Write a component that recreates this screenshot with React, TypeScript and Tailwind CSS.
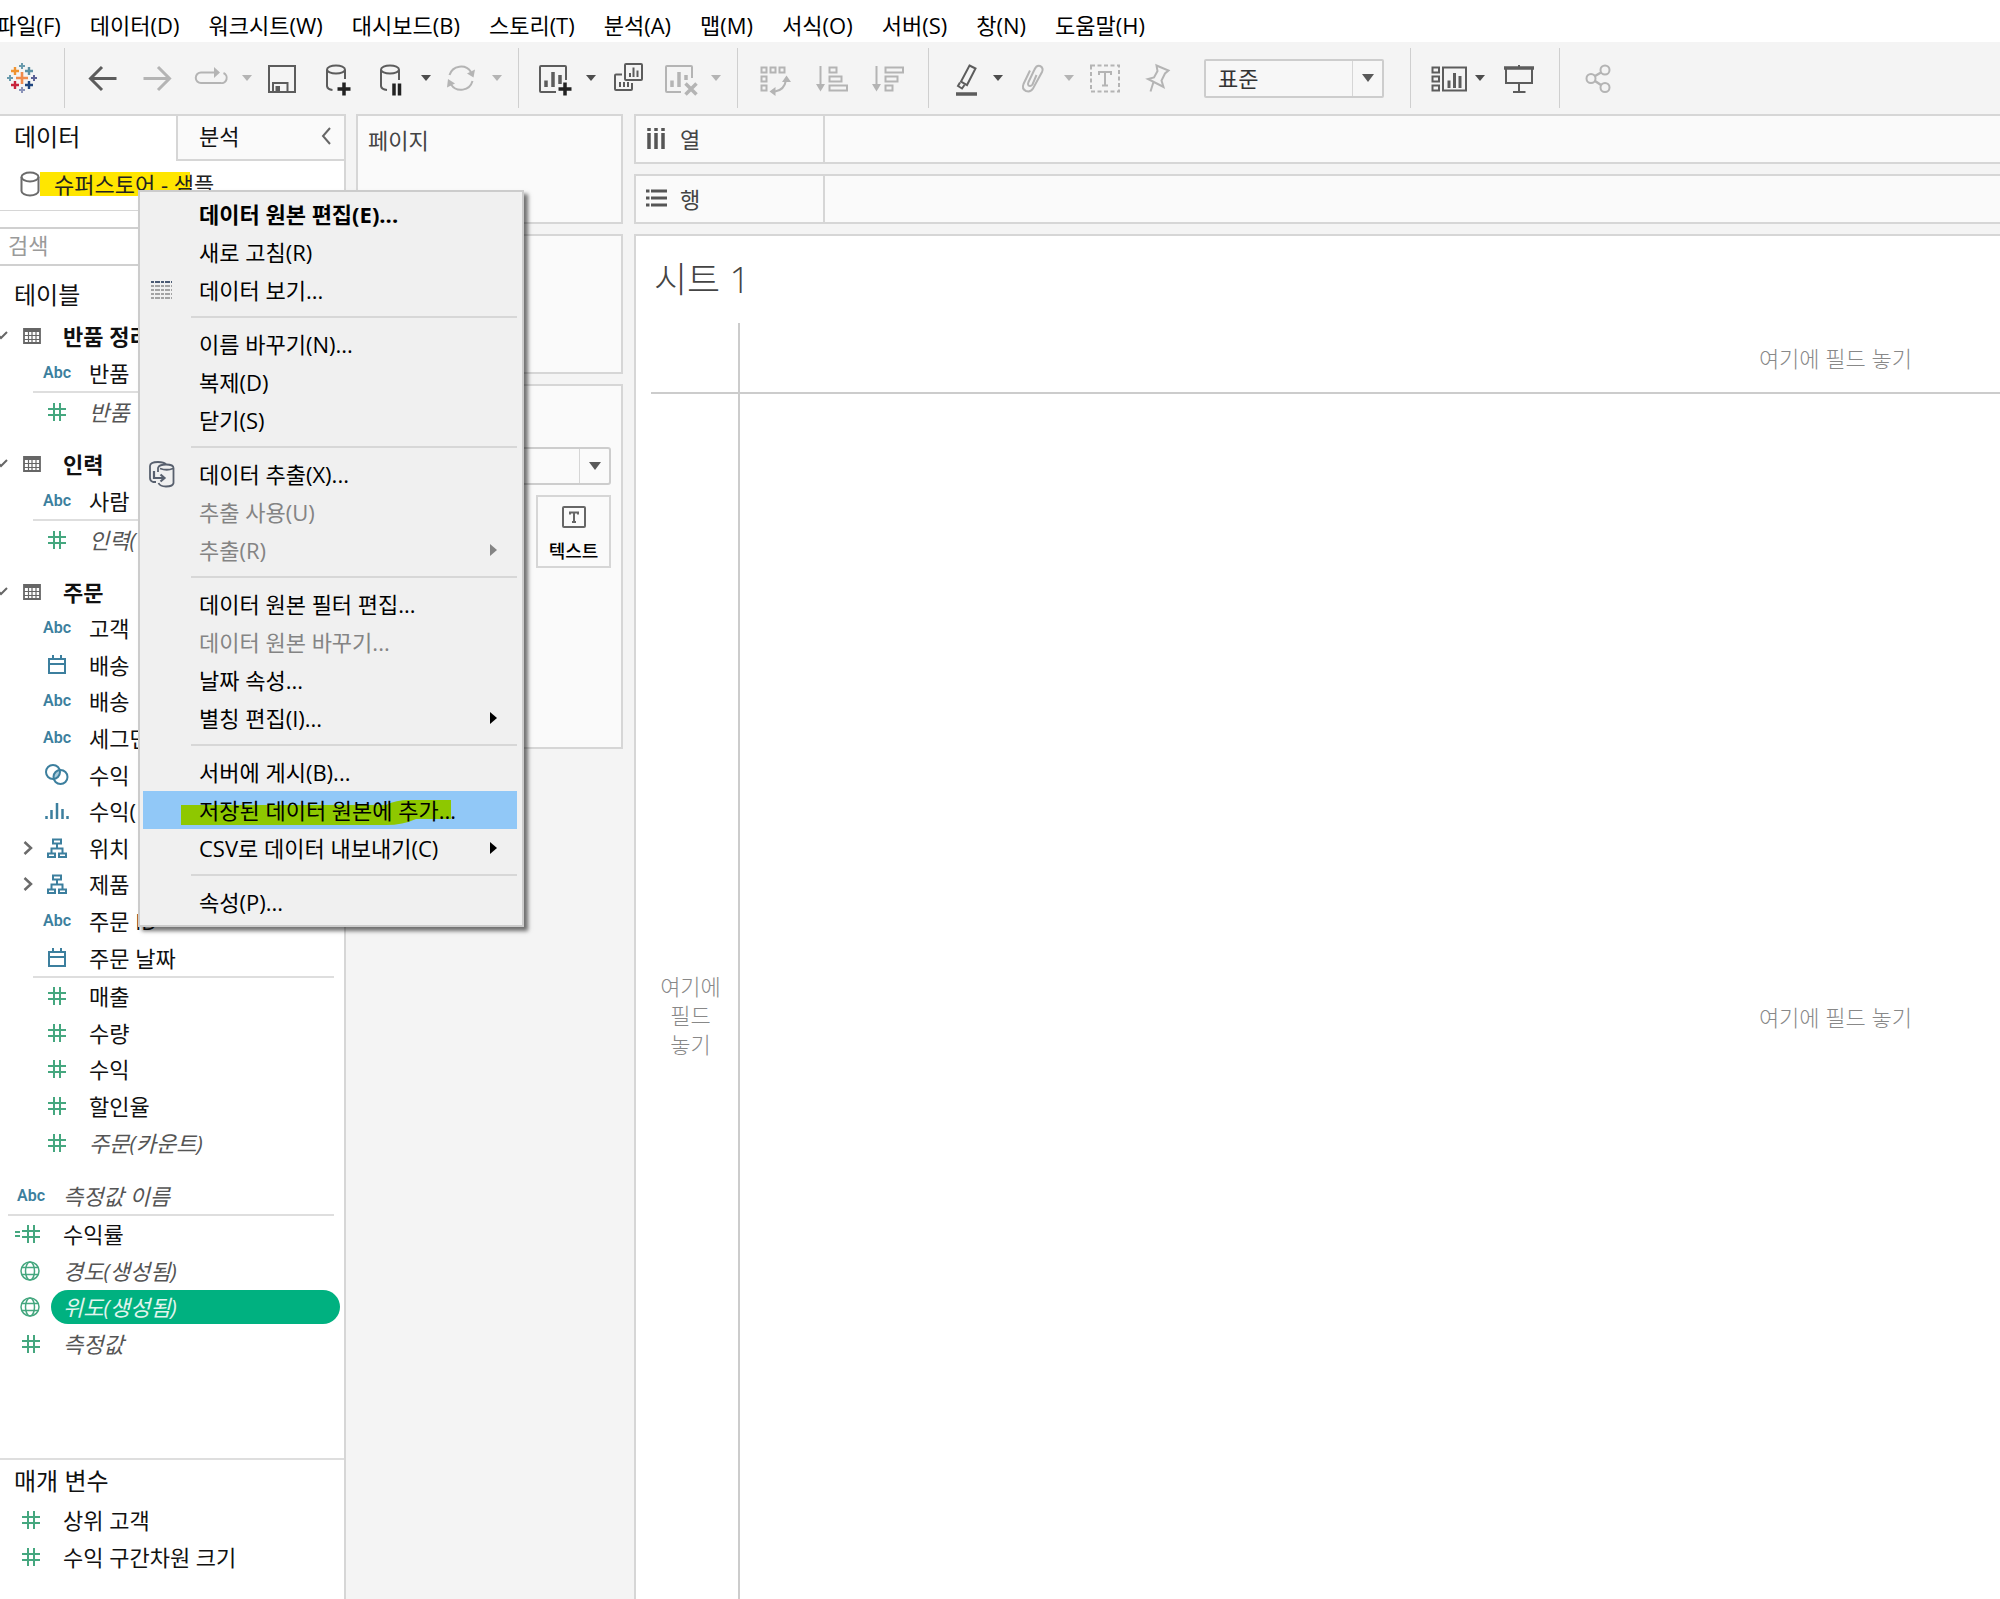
import type { ReactNode } from "react";

type Tone = "dark" | "light";

function Svg({ children, tone = "dark" }: { children: ReactNode; tone?: Tone }) {
  return (
    <svg
      viewBox="0 0 36 36"
      className={`size-9 shrink-0 ${tone === "dark" ? "text-[#5c5c5c]" : "text-[#b4b4b4]"}`}
      fill="none"
      stroke="currentColor"
      strokeWidth="2"
      aria-hidden="true"
    >
      {children}
    </svg>
  );
}

function Tool({ label, children, tone, wide = true }: { label: string; children: ReactNode; tone?: Tone; wide?: boolean }) {
  return (
    <button type="button" aria-label={label} className={`flex h-9 shrink-0 items-center justify-center ${wide ? "w-[54px]" : "w-11"}`}>
      <Svg tone={tone}>{children}</Svg>
    </button>
  );
}

function Caret({ label, tone = "dark" }: { label: string; tone?: Tone }) {
  return (
    <button type="button" aria-label={label} className="flex h-9 w-[17px] shrink-0 items-center justify-center">
      <svg viewBox="0 0 10 6" className={`h-[6px] w-[10px] ${tone === "dark" ? "text-[#4d4d4d]" : "text-[#b4b4b4]"}`} fill="currentColor" aria-hidden="true">
        <path d="M0 0H10L5 6Z" />
      </svg>
    </button>
  );
}

function Separator() {
  return <div className="h-[60px] w-px shrink-0 bg-[#cfcfcf]" />;
}

const menus = [
  "파일(F)",
  "데이터(D)",
  "워크시트(W)",
  "대시보드(B)",
  "스토리(T)",
  "분석(A)",
  "맵(M)",
  "서식(O)",
  "서버(S)",
  "창(N)",
  "도움말(H)",
];

function MenuBar() {
  return (
    <nav aria-label="메뉴" className="flex h-[42px] items-center gap-[29px] overflow-hidden bg-white pt-2 text-black">
      {menus.map((m) => (
        <button key={m} type="button" className={`shrink-0 ${m === "파일(F)" ? "-ml-1" : ""}`}>
          {m}
        </button>
      ))}
    </nav>
  );
}

const logoCrosses: [number, number, number, string][] = [
  [18, 18, 6, "#f08a4b"],
  [11, 11, 4, "#f0932f"],
  [25, 11, 4, "#5a8fa3"],
  [11, 25, 4, "#c8253c"],
  [25, 25, 4, "#1f457e"],
  [18, 6, 3, "#6a9bad"],
  [18, 30, 3, "#8a93b8"],
  [6, 18, 3, "#6a9bad"],
  [30, 18, 3, "#5b6196"],
];

function Toolbar() {
  return (
    <div role="toolbar" aria-label="도구 모음" className="flex h-[72px] items-center overflow-hidden bg-[#f4f4f4]">
      <div className="flex w-16 shrink-0 pl-1">
        <svg viewBox="0 0 36 36" className="size-9" role="img" aria-label="로고">
          {logoCrosses.map(([x, y, r, c], i) => (
            <path key={i} d={`M${x - r} ${y}H${x + r}M${x} ${y - r}V${y + r}`} stroke={c} strokeWidth={r > 4 ? 2.6 : r > 3 ? 2.4 : 2} />
          ))}
        </svg>
      </div>
      <Separator />
      <div className="flex shrink-0 items-center pr-[13px] pl-[11px]">
        <Tool label="뒤로">
          <path d="M31.5 18.5H6M17 7L5.500 18.500L17 30" strokeWidth="3" />
        </Tool>
        <Tool label="앞으로" tone="light">
          <path d="M4.500 18.500H30M19 7L30.500 18.500L19 30" strokeWidth="3" />
        </Tool>
        <Tool label="다시 실행" tone="light">
          <path d="M22 12.500H8A5.250 5.250 0 0 0 8 23H27.500A5.250 5.250 0 0 0 30.500 13" />
          <path d="M21 7L27 12.500L21 18Z" fill="currentColor" stroke="none" />
        </Tool>
        <Caret label="다시 실행 옵션" tone="light" />
        <Tool label="저장">
          <path d="M5 6H31V32H5ZM9 32V23H23.500V32" />
          <path d="M11.500 26H16V31H11.500Z" fill="currentColor" stroke="none" />
        </Tool>
        <Tool label="새 데이터 원본">
          <ellipse cx="18" cy="9.500" rx="9" ry="4" />
          <path d="M9 10V26Q9.500 29.500 14.500 30M27 10V19" />
          <path d="M26 22.500V35.500M19.500 29H32.500" stroke="#222" strokeWidth="3.500" />
        </Tool>
        <Tool label="자동 업데이트 일시 중지">
          <ellipse cx="18" cy="9.500" rx="9" ry="4" />
          <path d="M9 10V26Q9.500 29.500 15 30M27 10V20" />
          <path d="M22 23.500V35.500M27.500 23.500V35.500" stroke="#222" strokeWidth="3.500" />
        </Tool>
        <Caret label="업데이트 옵션" />
        <Tool label="새로 고침" tone="light">
          <path d="M6.500 15A12 12 0 0 1 28 12M29.500 21A12 12 0 0 1 8 24.500" />
          <path d="M32 9.500L30.500 17.500L24 13.500ZM4 27.500L5 19L12 23.500Z" fill="currentColor" stroke="none" />
        </Tool>
        <Caret label="새로 고침 옵션" tone="light" />
      </div>
      <Separator />
      <div className="flex shrink-0 items-center pr-[13px] pl-[9px]">
        <Tool label="새 워크시트">
          <path d="M19 32H4Q3 32 3 31V7Q3 6 4 6H28Q29 6 29 7V20" />
          <path d="M9 20.500V27M16 12V27M23 15V24" strokeWidth="3.500" />
          <path d="M28 22.500V35.500M21.500 29H34.500" stroke="#222" strokeWidth="3.500" />
        </Tool>
        <Caret label="새 워크시트 옵션" />
        <Tool label="복제">
          <path d="M17 5Q17 4 18 4H33Q34 4 34 5V19Q34 20 33 20H18Q17 20 17 19ZM14 14.500H8Q7 14.500 7 15.500V29Q7 30 8 30H23Q24 30 24 29V23" />
          <path d="M22 13V17M25.500 7.500V17M29.500 10.500V17M12 22V27M16 22V27M20 22V27" />
        </Tool>
        <Tool label="시트 지우기" tone="light">
          <path d="M19 32H5Q4 32 4 31V7Q4 6 5 6H29Q30 6 30 7V18" />
          <path d="M10 20.500V27M17 12V27M24 15V20" strokeWidth="3.500" />
          <path d="M23.500 23.500L34.500 34.500M34.500 23.500L23.500 34.500" strokeWidth="3.500" />
        </Tool>
        <Caret label="지우기 옵션" tone="light" />
      </div>
      <Separator />
      <div className="flex shrink-0 items-center gap-[2px] pr-[14px] pl-[10px]">
        <Tool label="행과 열 바꾸기" tone="light">
          <path d="M4.500 7.500H9.500V12.500H4.500ZM13.500 7.500H18.500V12.500H13.500ZM22.500 7.500H27.500V12.500H22.500ZM4.500 16.500H9.500V21.500H4.500ZM4.500 25.500H9.500V30.500H4.500Z" />
          <path d="M29 20Q27.500 30 18 31.500" />
          <path d="M29.500 15.500L34 22H25ZM12.500 31.500L18.500 27V36Z" fill="currentColor" stroke="none" />
        </Tool>
        <Tool label="오름차순 정렬" tone="light">
          <path d="M7.500 6V28M16.500 7.500H23.500V12.500H16.500ZM16.500 16.500H28.500V21.500H16.500ZM16.500 25.500H34V30.500H16.500Z" />
          <path d="M3 24H12L7.500 31.500Z" fill="currentColor" stroke="none" />
        </Tool>
        <Tool label="내림차순 정렬" tone="light">
          <path d="M7.500 6V28M16.500 7.500H34V12.500H16.500ZM16.500 16.500H28.500V21.500H16.500ZM16.500 25.500H23.500V30.500H16.500Z" />
          <path d="M3 24H12L7.500 31.500Z" fill="currentColor" stroke="none" />
        </Tool>
      </div>
      <Separator />
      <div className="flex shrink-0 items-center pr-[26px] pl-4">
        <Tool label="강조" wide={false}>
          <path d="M20.500 5.500L26.500 8.500L18 25L12 21.500ZM11 22.500L9 26L13 28.500L15.500 25" />
          <path d="M7 34H28" strokeWidth="3.500" />
        </Tool>
        <Caret label="강조 옵션" />
        <Tool label="그룹" tone="light">
          <path d="M21.500 15L17.500 24.500Q15.500 27 13.500 25.500Q12.500 24 13.500 22L19.500 9.500Q21.500 5 25 6Q29 8 27 12L18 28.500Q15.500 32.500 11 31Q6.500 29 8.500 24L15 10.500" />
        </Tool>
        <Caret label="그룹 옵션" tone="light" />
        <Tool label="레이블 표시" tone="light">
          <rect x="5" y="5.500" width="28" height="26" strokeDasharray="4 2.500" />
          <path d="M13 15V12H25V15M19 12V25.500M16 25.500H22" />
        </Tool>
        <Tool label="축 고정" tone="light">
          <path d="M16.500 5.500L28.500 10.500L25 13.500L21.500 20.500L23.500 27L8 19L14 17.500L17.500 11ZM13.500 22L10.500 31.500" />
        </Tool>
        <div className="relative ml-[19px] h-[39px] w-[180px] rounded-[2px] border-2 border-[#cdcdcd] bg-[#f7f7f7]">
          <select aria-label="맞춤" className="h-full w-full appearance-none bg-transparent pl-3 text-[#333] outline-none">
            <option>표준</option>
          </select>
          <SelectArrow />
        </div>
      </div>
      <Separator />
      <div className="flex shrink-0 items-center pr-[13px] pl-4">
        <Tool label="카드 표시" wide={false}>
          <path d="M1.500 7.500H8V12.500H1.500ZM1.500 16.500H8V21.500H1.500ZM1.500 25.500H8V30.500H1.500ZM12 7.500H35V30.500H12Z" />
          <path d="M18 20.500V28M23.500 13V28M29 16V28" strokeWidth="3" />
        </Tool>
        <Caret label="카드 옵션" />
        <div className="w-1" />
        <Tool label="프레젠테이션 모드">
          <path d="M5 9V23H31V9M18 5V8M18 23V32M12 32H24.500" />
          <path d="M3 8H33" strokeWidth="3.500" />
        </Tool>
      </div>
      <Separator />
      <div className="flex shrink-0 items-center pl-3">
        <Tool label="공유" tone="light">
          <circle cx="10" cy="18.500" r="4.500" />
          <circle cx="24" cy="10" r="4.500" />
          <circle cx="24" cy="27.500" r="4.500" />
          <path d="M14 16L20 12.500M14 21L20 25" strokeWidth="2.500" />
        </Tool>
      </div>
    </div>
  );
}

/** Divider and arrow laid over the right end of a drop-down. */
function SelectArrow() {
  return (
    <span className="pointer-events-none absolute inset-y-0 right-0 flex w-[30px] items-center justify-center border-l border-[#d6d6d6]">
      <svg viewBox="0 0 12 8" className="h-2 w-3 text-[#595959]" fill="currentColor" aria-hidden="true">
        <path d="M0 0H12L6 8Z" />
      </svg>
    </span>
  );
}

type FieldKind = "abc" | "num" | "date" | "set" | "bin" | "tree" | "calc" | "geo";

function FieldIcon({ kind }: { kind: FieldKind }) {
  const cls = "h-5 w-7 shrink-0";
  const blue = "#3c7f9e";
  const green = "#45a77f";
  switch (kind) {
    case "abc":
      return <span className="w-7 shrink-0 text-center font-['Roboto',sans-serif] text-base leading-5 font-semibold text-[#3c7f9e]">Abc</span>;
    case "num":
      return (
        <svg viewBox="0 0 28 20" className={cls} fill="none" stroke={green} strokeWidth="2" aria-hidden="true">
          <path d="M11 1V19M17 1V19M5 7H23M5 13H23" />
        </svg>
      );
    case "calc":
      return (
        <svg viewBox="0 0 28 20" className={`${cls} overflow-visible`} fill="none" stroke={green} strokeWidth="2" aria-hidden="true">
          <path d="M11 1V19M17 1V19M5 7H23M5 13H23M-2 8H3M-2 12H3" />
        </svg>
      );
    case "date":
      return (
        <svg viewBox="0 0 28 20" className={cls} fill="none" stroke={blue} strokeWidth="2" aria-hidden="true">
          <path d="M6 4H22V18H6ZM6 9H22M10 0V4M18 0V4" />
        </svg>
      );
    case "set":
      return (
        <svg viewBox="0 0 28 20" className={`${cls} overflow-visible`} aria-hidden="true" fill="none" stroke={blue} strokeWidth="2">
          <path d="M10.500 13.500Q10 7 16.500 6Q18 12 10.500 13.500Z" fill="#a9cbdb" stroke="none" />
          <circle cx="10" cy="7" r="7" />
          <circle cx="17.500" cy="12" r="7" />
        </svg>
      );
    case "bin":
      return (
        <svg viewBox="0 0 28 20" className={cls} fill="none" stroke={blue} strokeWidth="2.500" aria-hidden="true">
          <path d="M3.500 15V18M8.500 9V18M14 2V18M19.500 8V18M24.500 15V18" />
        </svg>
      );
    case "tree":
      return (
        <svg viewBox="0 0 28 20" className={cls} fill="none" stroke={blue} strokeWidth="2" aria-hidden="true">
          <path d="M10 1.500H18V5.500H10ZM5 15.500H12V19H5ZM16 15.500H23V19H16ZM14 5.500V10M8.500 15.500V10.500H19.500V15.500" />
        </svg>
      );
    case "geo":
      return (
        <svg viewBox="0 0 28 20" className={cls} fill="none" stroke={green} strokeWidth="1.500" aria-hidden="true">
          <circle cx="13" cy="10" r="9" />
          <ellipse cx="13" cy="10" rx="4.500" ry="9" />
          <path d="M5 6.500H21M5 13.500H21" />
        </svg>
      );
  }
}

type FieldData = { kind: FieldKind; name: string; italic?: boolean; expand?: boolean; selected?: boolean };

function Field({ kind, name, italic, expand, selected, nested }: FieldData & { nested?: boolean }) {
  return (
    <li className={`flex h-full items-center ${nested ? "pl-[43px]" : "pl-[17px]"}`}>
      {expand && (
        <svg viewBox="0 0 10 14" className="-ml-5 mr-[10px] h-[14px] w-[10px]" fill="none" stroke="#6b6b6b" strokeWidth="2.500" aria-hidden="true">
          <path d="M1.500 1L8 7L1.500 13" />
        </svg>
      )}
      <FieldIcon kind={kind} />
      <button
        type="button"
        className={`mr-1 h-[34px] flex-1 rounded-full text-left leading-[34px] whitespace-nowrap ${nested ? "ml-1 pl-[14px]" : "ml-[6px] pl-[12px]"} ${italic ? "italic" : ""} ${
          selected ? "bg-[#00b180] text-[#e2f5ee]" : italic ? "text-[#555]" : "text-[#111]"
        }`}
      >
        {name}
      </button>
    </li>
  );
}

function TableHeader({ name }: { name: string }) {
  return (
    <button type="button" className="flex h-9 w-full items-center text-left font-bold whitespace-nowrap text-[#111]">
      <svg viewBox="0 0 8 10" className="mr-[15px] h-[10px] w-2" fill="none" stroke="#666" strokeWidth="2" aria-hidden="true">
        <path d="M-4 2L1 7L7 1" />
      </svg>
      <svg viewBox="0 0 18 16" className="mr-[22px] h-4 w-[18px]" fill="none" stroke="#666" aria-hidden="true">
        <path d="M1 1H17V15H1Z" strokeWidth="1.800" />
        <path d="M1 2.500H17" strokeWidth="3" />
        <path d="M1 7.500H17M1 11.500H17M5.500 4V15M9 4V15M13 4V15" strokeWidth="1.200" />
      </svg>
      {name}
    </button>
  );
}

const orderDims: FieldData[] = [
  { kind: "abc", name: "고객" },
  { kind: "date", name: "배송" },
  { kind: "abc", name: "배송" },
  { kind: "abc", name: "세그먼트" },
  { kind: "set", name: "수익" },
  { kind: "bin", name: "수익(" },
  { kind: "tree", name: "위치", expand: true },
  { kind: "tree", name: "제품", expand: true },
  { kind: "abc", name: "주문 ID" },
  { kind: "date", name: "주문 날짜" },
];

const orderMeasures: FieldData[] = [
  { kind: "num", name: "매출" },
  { kind: "num", name: "수량" },
  { kind: "num", name: "수익" },
  { kind: "num", name: "할인율" },
  { kind: "num", name: "주문(카운트)", italic: true },
];

const generated: FieldData[] = [
  { kind: "calc", name: "수익률" },
  { kind: "geo", name: "경도(생성됨)", italic: true },
  { kind: "geo", name: "위도(생성됨)", italic: true, selected: true },
  { kind: "num", name: "측정값", italic: true },
];

const parameters: FieldData[] = [
  { kind: "num", name: "상위 고객" },
  { kind: "num", name: "수익 구간차원 크기" },
];

function NestedDivider() {
  return <div className="mr-[10px] ml-[33px] h-0.5 bg-[#dedede]" />;
}

function Sidebar() {
  return (
    <aside className="flex w-[346px] shrink-0 flex-col border-t-2 border-r-2 border-[#d6d6d6] bg-white">
      <div role="tablist" className="flex h-[45px]">
        <button type="button" role="tab" aria-selected="true" className="w-[176px] pb-1 pl-[14px] text-left text-2xl leading-none text-[#111]">
          데이터
        </button>
        <button
          type="button"
          role="tab"
          aria-selected="false"
          className="flex flex-1 items-center justify-between border-b-2 border-l-2 border-[#d6d6d6] bg-[#fafafa] pr-[13px] pb-1 pl-[21px] text-[#111]"
        >
          분석
          <svg viewBox="0 0 10 18" className="h-[18px] w-[10px]" fill="none" stroke="#666" strokeWidth="2" aria-hidden="true">
            <path d="M9 1L2 9L9 17" />
          </svg>
        </button>
      </div>
      <button type="button" className="flex h-[50px] items-center border-b border-[#d6d6d6] pb-1 pl-5 text-left">
        <svg viewBox="0 0 20 26" className="h-[26px] w-5" fill="none" stroke="#6b6b6b" strokeWidth="2" aria-hidden="true">
          <ellipse cx="10" cy="6" rx="8.500" ry="4.500" />
          <path d="M1.500 6V20A8.500 4.500 0 0 0 18.500 20V6" />
        </svg>
        <span className="bg-linear-to-r from-[#ffe600] from-[150px] to-transparent to-[150px] pr-2 pl-[14px] leading-6 text-[#222]">슈퍼스토어 - 샘플</span>
      </button>
      <input
        type="text"
        aria-label="검색"
        placeholder="검색"
        className="mt-4 h-[39px] w-full border-y-2 border-[#d0d0d0] bg-white pb-1 pl-2 outline-none placeholder:text-[#9a9a9a]"
      />
      <h2 className="flex h-[52px] items-center pt-[6px] pl-[14px] text-2xl leading-none text-[#111]">테이블</h2>

      <TableHeader name="반품 정리" />
      <ul className="grid h-[37px]">
        <Field nested kind="abc" name="반품" />
      </ul>
      <NestedDivider />
      <ul className="grid h-[37px]">
        <Field nested kind="num" name="반품" italic />
      </ul>

      <div className="h-4" />
      <TableHeader name="인력" />
      <ul className="grid h-[37px]">
        <Field nested kind="abc" name="사람" />
      </ul>
      <NestedDivider />
      <ul className="grid h-[37px]">
        <Field nested kind="num" name="인력(" italic />
      </ul>

      <div className="h-4" />
      <TableHeader name="주문" />
      <ul className="grid h-[366px] auto-rows-fr">
        {orderDims.map((f, i) => (
          <Field key={i} nested {...f} />
        ))}
      </ul>
      <NestedDivider />
      <ul className="grid h-[183px] auto-rows-fr">
        {orderMeasures.map((f, i) => (
          <Field key={i} nested {...f} />
        ))}
      </ul>

      <ul className="mt-4 grid h-[37px]">
        <Field kind="abc" name="측정값 이름" italic />
      </ul>
      <div className="mr-[10px] ml-2 h-0.5 bg-[#dedede]" />
      <ul className="grid h-[146px] auto-rows-fr">
        {generated.map((f, i) => (
          <Field key={i} {...f} />
        ))}
      </ul>

      <section className="mt-24 border-t-2 border-[#dedede]">
        <h2 className="flex h-[42px] items-center pl-[14px] text-2xl leading-none text-[#111]">매개 변수</h2>
        <ul className="grid h-[73px] auto-rows-fr">
          {parameters.map((f, i) => (
            <Field key={i} {...f} />
          ))}
        </ul>
      </section>
    </aside>
  );
}

function Cards() {
  return (
    <div className="flex w-[288px] shrink-0 flex-col gap-[10px] pr-[11px] pl-[10px]">
      <section className="h-[110px] border-2 border-[#d6d6d6] bg-[#fafafa] pt-2 pl-[10px]">
        <h3 className="text-[#444]">페이지</h3>
      </section>
      <section className="h-[140px] border-2 border-[#d6d6d6] bg-[#fafafa]" />
      <section className="flex h-[365px] flex-col items-end border-2 border-[#d6d6d6] bg-[#fafafa] pt-[61px] pr-[10px]">
        <div className="relative h-[38px] w-[240px] rounded-[3px] border-2 border-[#cdcdcd]">
          <select aria-label="마크 유형" className="h-full w-full appearance-none bg-transparent outline-none" />
          <SelectArrow />
        </div>
        <button type="button" className="mt-[10px] flex h-[73px] w-[75px] flex-col items-center gap-[11px] border-2 border-[#d6d6d6] pt-[9px] text-lg leading-6 font-medium text-black">
          <svg viewBox="0 0 24 22" className="h-[22px] w-6" fill="none" stroke="#666" strokeWidth="2" aria-hidden="true">
            <rect x="1" y="1" width="22" height="20" rx="1" />
            <path d="M8 8.500V6.500H16V8.500M12 6.500V16M10 16H14" />
          </svg>
          텍스트
        </button>
      </section>
    </div>
  );
}

function Shelf({ name, icon }: { name: string; icon: ReactNode }) {
  return (
    <section className="flex h-[50px] border-2 border-r-0 border-[#d6d6d6] bg-[#fafafa] text-[#444]">
      <div className="flex w-[189px] shrink-0 items-center gap-3 border-r-2 border-[#d6d6d6] pl-[10px]">
        <svg viewBox="0 0 22 22" className="size-[22px]" fill="none" stroke="#555" aria-hidden="true">
          {icon}
        </svg>
        {name}
      </div>
    </section>
  );
}

function Worksheet() {
  return (
    <main className="flex min-w-0 flex-1 flex-col gap-[10px]">
      <Shelf
        name="열"
        icon={<path d="M3 0V3M10 0V3M17 0V3M3 5V21M10 5V21M17 5V21" strokeWidth="3.500" />}
      />
      <Shelf
        name="행"
        icon={<path d="M0 3H3.500M0 10H3.500M0 17H3.500M5 3H21M5 10H21M5 17H21" strokeWidth="3" />}
      />
      <section className="flex flex-1 flex-col border-t-2 border-l-2 border-[#d6d6d6] bg-white">
        <h1 className="flex h-[87px] items-center pl-[18px] text-4xl leading-none font-light text-[#444]">시트 1</h1>
        <div className="flex flex-1 pl-[15px]">
          <div className="flex w-[87px] shrink-0 flex-col">
            <div className="h-[71px] border-b-2 border-[#cccccc]" />
            <p className="flex flex-1 items-center justify-center pt-[38px] pr-2 text-center leading-[29px] font-light text-[#888]">
              여기에
              <br />
              필드
              <br />
              놓기
            </p>
          </div>
          <div className="flex flex-1 flex-col border-l-2 border-[#cccccc] font-light text-[#888]">
            <p className="flex h-[71px] items-center justify-end border-b-2 border-[#cccccc] pr-[88px]">여기에 필드 놓기</p>
            <p className="flex flex-1 items-center justify-end pt-10 pr-[88px]">여기에 필드 놓기</p>
          </div>
        </div>
      </section>
    </main>
  );
}

type Item = { label: string; bold?: boolean; disabled?: boolean; sub?: boolean; active?: boolean; icon?: "grid" | "extract" };

const contextMenu: Item[][] = [
  [{ label: "데이터 원본 편집(E)...", bold: true }, { label: "새로 고침(R)" }, { label: "데이터 보기...", icon: "grid" }],
  [{ label: "이름 바꾸기(N)..." }, { label: "복제(D)" }, { label: "닫기(S)" }],
  [
    { label: "데이터 추출(X)...", icon: "extract" },
    { label: "추출 사용(U)", disabled: true },
    { label: "추출(R)", disabled: true, sub: true },
  ],
  [
    { label: "데이터 원본 필터 편집..." },
    { label: "데이터 원본 바꾸기...", disabled: true },
    { label: "날짜 속성..." },
    { label: "별칭 편집(I)...", sub: true },
  ],
  [{ label: "서버에 게시(B)..." }, { label: "저장된 데이터 원본에 추가...", active: true }, { label: "CSV로 데이터 내보내기(C)", sub: true }],
  [{ label: "속성(P)..." }],
];

function MenuIcon({ name }: { name: "grid" | "extract" }) {
  if (name === "grid") {
    return (
      <svg viewBox="0 0 26 26" className="size-[26px]" fill="none" aria-hidden="true">
        <path d="M2 5H23" stroke="#4a5a73" strokeWidth="2" strokeDasharray="3 1 5 1" />
        <path d="M2 9H23M2 13H23M2 17H23M2 21H23" stroke="#a3a3a3" strokeWidth="2" strokeDasharray="3 1 5 1" />
      </svg>
    );
  }
  return (
    <svg viewBox="0 0 26 28" className="h-7 w-[26px]" fill="none" stroke="#58606e" strokeWidth="1.800" aria-hidden="true">
      <path d="M7 22H4Q1 21 1 18V6Q1 2 9 2Q15 2 17 4.500" />
      <path d="M9 12V8Q10 4.500 17 4.500Q24.500 4.500 24.500 8V23Q24 26.500 17 26.500Q11 26.500 9.500 23M11 8.500Q18 11 24 8.500" />
      <path d="M5 11V18H14M11.500 14.500L15.500 18L11.500 21.500" strokeWidth="2.200" />
    </svg>
  );
}

function ContextMenu() {
  return (
    <div role="menu" className="absolute top-[190px] left-[138px] w-[386px] border-2 border-[#cccccc] bg-[#f0f0f0] pt-[3px] pr-[5px] pb-1 pl-[3px] shadow-[4px_4px_4px_rgba(0,0,0,0.55)]">
      {contextMenu.map((group, g) => (
        <div key={g}>
          {g > 0 && <div className="my-[7px] ml-12 h-0.5 bg-[#d7d7d7]" />}
          {group.map((item) => (
            <button
              key={item.label}
              type="button"
              role="menuitem"
              disabled={item.disabled}
              className={`flex h-[38px] w-full items-center pr-5 text-left whitespace-nowrap ${item.active ? "bg-[#91c8f7]" : ""} ${item.disabled ? "text-[#848484]" : "text-black"} ${item.bold ? "font-bold" : ""}`}
            >
              <span className="flex w-14 shrink-0 items-center pl-[6px]">{item.icon && <MenuIcon name={item.icon} />}</span>
              {item.active ? (
                <span className="relative">
                  <svg viewBox="0 0 270 26" className="absolute top-[5px] -left-[18px] h-[26px] w-[270px]" fill="#8ec800" aria-hidden="true">
                    <path d="M0 6H205Q215 1 228 1H270V20H235Q222 26 205 26H0Z" />
                  </svg>
                  <span className="relative">{item.label}</span>
                </span>
              ) : (
                item.label
              )}
              {item.sub && (
                <svg viewBox="0 0 7 12" className="ml-auto h-3 w-[7px]" fill="currentColor" aria-hidden="true">
                  <path d="M0 0L7 6L0 12Z" />
                </svg>
              )}
            </button>
          ))}
        </div>
      ))}
    </div>
  );
}

export default function App() {
  return (
    <div className="relative flex min-h-screen flex-col overflow-hidden bg-[#f4f4f4] font-['Open_Sans','Noto_Sans_CJK_KR',sans-serif] text-[22px] leading-8">
      <MenuBar />
      <Toolbar />
      <div className="flex flex-1">
        <Sidebar />
        <Cards />
        <Worksheet />
      </div>
      <ContextMenu />
    </div>
  );
}
